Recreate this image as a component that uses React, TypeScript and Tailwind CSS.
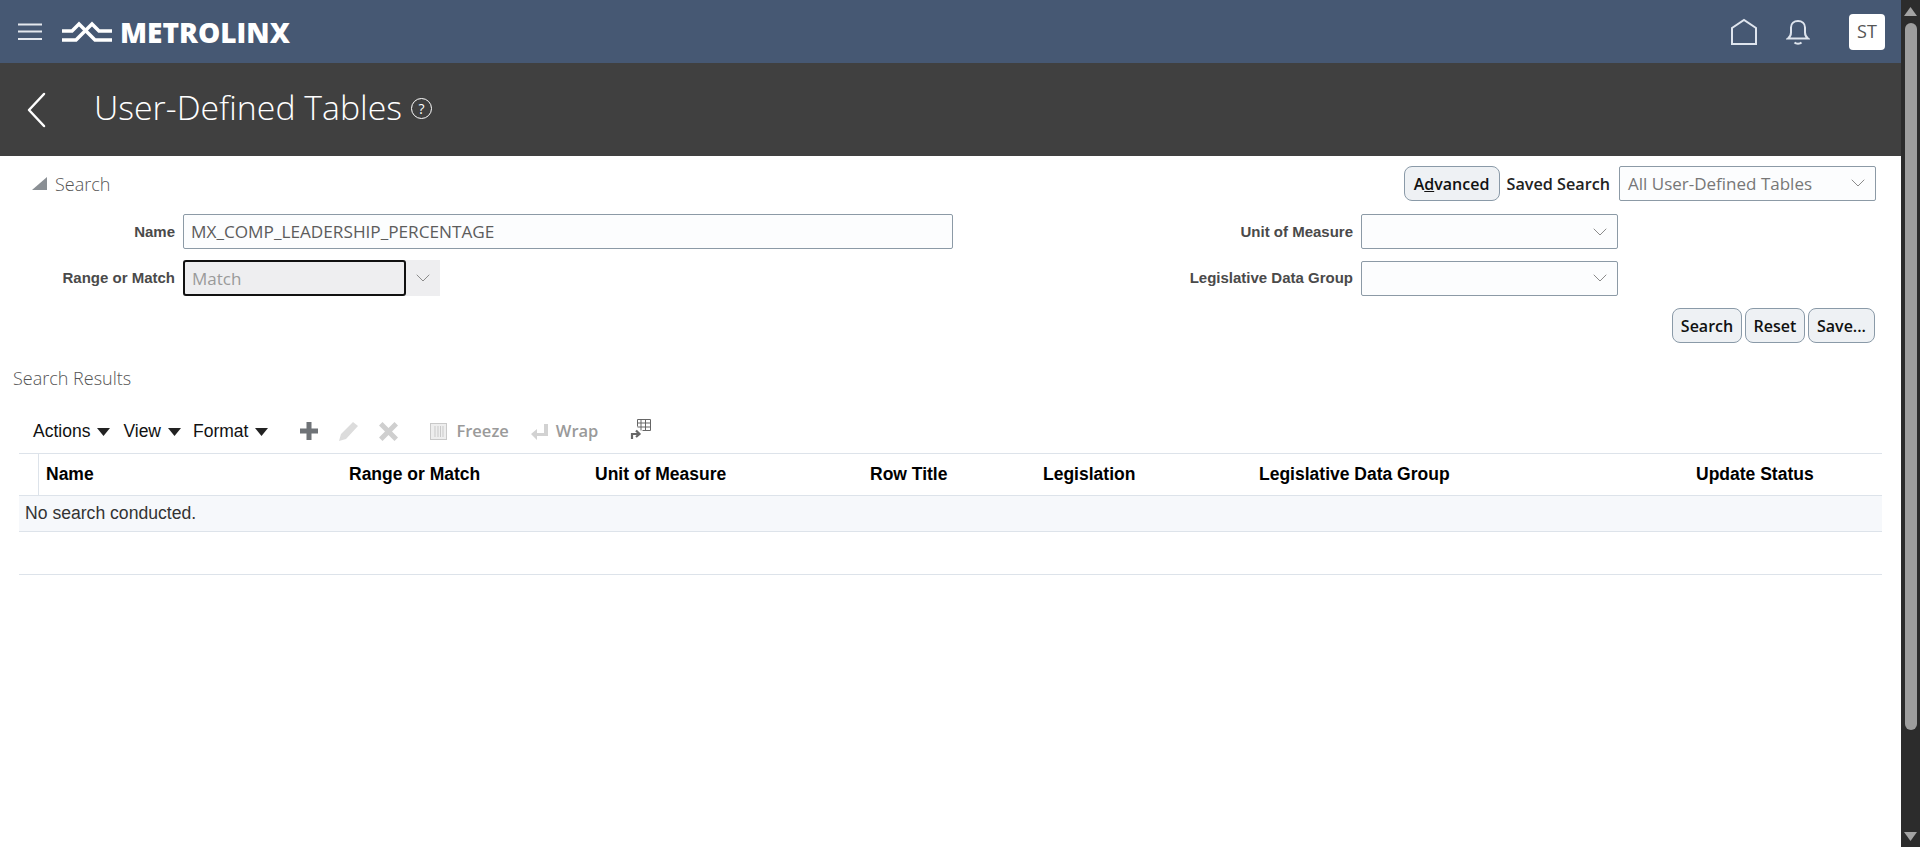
import { ChevronDown } from 'lucide-react'

const labelCls = "font-['Liberation_Sans',sans-serif] text-[15px] font-bold text-[#4a4a4a] text-right mt-[1px]"
const buttonCls =
  "h-[35px] pt-[1px] rounded-[8px] border border-[#8a9aa8] bg-[#eef1f4] font-['Open_Sans',sans-serif] text-[16px] font-semibold text-[#111] flex items-center justify-center"

function Logo() {
  return (
    <div className="flex items-center ml-[20px]">
      <svg width="50" height="22" viewBox="0 0 50 22" fill="none" stroke="#fff" strokeWidth="3.5">
        <path d="M0 10h10l7-7 16 16h17" />
        <path d="M0 19h14L30 3l7 7h13" />
      </svg>
      <span className="ml-[8px] font-['Open_Sans',sans-serif] text-[28px] leading-none font-extrabold text-white">
        METROLINX
      </span>
    </div>
  )
}

function SelectBox({ width, text }: { width: string; text?: string }) {
  return (
    <div className={`${width} h-[35px] rounded-[2px] border border-[#8c9aa6] bg-[#fcfdfe] flex items-center pl-[8px] pr-[5px]`}>
      <span className="mt-[2px] font-['Open_Sans',sans-serif] text-[17px] text-[#777]">{text}</span>
      <ChevronDown size={24} strokeWidth={1} className="ml-auto text-[#8b8b8b]" />
    </div>
  )
}

function ToolbarMenu({ label }: { label: string }) {
  return (
    <span className="flex items-center font-['Liberation_Sans',sans-serif] text-[17.500px] text-[#111]">
      {label}
      <svg width="13" height="8" viewBox="0 0 13 8" className="ml-[7px] mt-[2px]">
        <path d="M0 0h13L6.500 8z" fill="#222" />
      </svg>
    </span>
  )
}

const columns = [
  { name: 'Name', width: 'w-[303px]' },
  { name: 'Range or Match', width: 'w-[246px]' },
  { name: 'Unit of Measure', width: 'w-[275px]' },
  { name: 'Row Title', width: 'w-[173px]' },
  { name: 'Legislation', width: 'w-[216px]' },
  { name: 'Legislative Data Group', width: 'w-[437px]' },
  { name: 'Update Status', width: 'w-[170px]' },
]

export default function App() {
  return (
    <div className="flex h-screen overflow-hidden bg-white">
      <main className="flex-1 min-w-0">
        {/* Global header */}
        <header className="h-[63px] bg-[#465873] flex items-center pl-[18px] pr-[16px]">
          <svg width="24" height="18" viewBox="0 0 24 18" fill="none" stroke="#e4e8ee" strokeWidth="2">
            <path d="M0 1.500h24M0 8.500h24M0 16h24" />
          </svg>
          <Logo />
          <svg width="28" height="28" viewBox="0 0 28 28" fill="none" stroke="#dfe5ee" strokeWidth="2" className="ml-auto">
            <path d="M2 26V10L14 2l12 8v16z" />
          </svg>
          <svg width="24" height="28" viewBox="0 0 24 28" fill="none" stroke="#dfe5ee" strokeWidth="2" className="ml-[28px]">
            <path d="M2 20.500c2-1.500 3-3 3-6V9.500C5 5.500 8 3 12 3s7 2.500 7 6.500v5c0 3 1 4.500 3 6z" />
            <path d="M8.500 24.500c1.500 1.500 5.500 1.500 7 0" />
          </svg>
          <div className="ml-[39px] w-[36px] h-[36px] rounded-[4px] bg-white flex items-center justify-center font-['Open_Sans',sans-serif] text-[18px] text-[#555]">
            ST
          </div>
        </header>

        {/* Page title */}
        <div className="h-[93px] bg-[#404040] flex items-center pl-[27px]">
          <svg width="19" height="36" viewBox="0 0 19 36" fill="none" stroke="#fff" strokeWidth="2.500" strokeLinecap="round" strokeLinejoin="round" className="mt-[1px]">
            <path d="M17 2L2 18l15 16" />
          </svg>
          <h1 className="ml-[48px] -mt-[3px] font-['Open_Sans',sans-serif] text-[33.800px] font-light leading-none text-white">
            User-Defined Tables
          </h1>
          <div className="ml-[9px] -mt-[2px] w-[21px] h-[21px] rounded-full border-[1.500px] border-white flex items-center justify-center font-['Open_Sans',sans-serif] text-[14px] text-white">
            ?
          </div>
        </div>

        {/* Search panel */}
        <section className="pt-[10px] pr-[25px]">
          <div className="flex items-center h-[34px]">
            <svg width="15" height="13" viewBox="0 0 15 13" className="ml-[32px]">
              <path d="M0 13h15V0z" fill="#8a8f94" />
            </svg>
            <span className="ml-[8px] mt-[2px] font-['Open_Sans',sans-serif] text-[18px] font-light text-[#555]">Search</span>
            <button className={`${buttonCls} ml-auto w-[96px]`}>
              A<span className="underline">d</span>vanced
            </button>
            <span className="ml-[7px] mt-[2px] font-['Open_Sans',sans-serif] text-[16.200px] font-semibold text-[#222]">Saved Search</span>
            <div className="ml-[9px]">
              <SelectBox width="w-[257px]" text="All User-Defined Tables" />
            </div>
          </div>

          <div className="flex items-center mt-[14px]">
            <span className={`${labelCls} w-[175px]`}>Name</span>
            <div className="ml-[8px] w-[770px] h-[35px] rounded-[2px] border border-[#8c9aa6] bg-[#fcfdfe] flex items-center pl-[7px] pt-[1px] font-['Open_Sans',sans-serif] text-[17.200px] text-[#5c5c5c]">
              MX_COMP_LEADERSHIP_PERCENTAGE
            </div>
            <span className={`${labelCls} ml-auto`}>Unit of Measure</span>
            <div className="ml-[8px] mr-[258px]">
              <SelectBox width="w-[257px]" />
            </div>
          </div>

          <div className="flex items-center mt-[11px]">
            <span className={`${labelCls} w-[175px]`}>Range or Match</span>
            <div className="ml-[8px] flex items-center h-[36px] w-[257px] bg-[#eeeef0]">
              <div className="w-[223px] h-full rounded-[3px] border-2 border-[#111] flex items-center pl-[7px] pt-[2px] font-['Open_Sans',sans-serif] text-[17px] text-[#9a9a9a]">
                Match
              </div>
              <ChevronDown size={24} strokeWidth={1} className="ml-[5px] text-[#8b8b8b]" />
            </div>
            <span className={`${labelCls} ml-auto`}>Legislative Data Group</span>
            <div className="ml-[8px] mr-[258px]">
              <SelectBox width="w-[257px]" />
            </div>
          </div>

          <div className="flex justify-end gap-[3px] mt-[12px] pr-[1px]">
            <button className={`${buttonCls} w-[70px]`}>Search</button>
            <button className={`${buttonCls} w-[60px]`}>Reset</button>
            <button className={`${buttonCls} w-[67px]`}>Save...</button>
          </div>
        </section>

        {/* Results */}
        <section>
          <h2 className="mt-[22px] ml-[13px] h-[26px] font-['Open_Sans',sans-serif] text-[18px] leading-[26px] font-light text-[#555]">
            Search Results
          </h2>
          <div className="flex items-center mt-[25px] h-[30px] ml-[33px]">
            <ToolbarMenu label="Actions" />
            <div className="ml-[13px]"><ToolbarMenu label="View" /></div>
            <div className="ml-[12px]"><ToolbarMenu label="Format" /></div>
            <svg width="18" height="18" viewBox="0 0 18 18" className="ml-[32px]">
              <path d="M6.500 0h5v6.500H18v5h-6.500V18h-5v-6.500H0v-5h6.500z" fill="#6f7377" />
            </svg>
            <svg width="22" height="22" viewBox="0 0 22 22" className="ml-[20px]">
              <path d="M15 2l5 4L8 19l-7 2 2-7zM16 0l5 4" fill="#dcdcdc" />
            </svg>
            <svg width="19" height="19" viewBox="0 0 19 19" className="ml-[19px]">
              <path d="M3.500 0l6 6 6-6L19 3.500l-6 6 6 6-3.500 3.500-6-6-6 6L0 15.500l6-6-6-6z" fill="#cfcfcf" />
            </svg>
            <svg width="17" height="17" viewBox="0 0 17 17" fill="none" stroke="#c9c9c9" className="ml-[32px]">
              <rect x="0.500" y="0.500" width="16" height="16" fill="#eee" />
              <path d="M5 3v11M8 3v11M10.500 3v11M13 3v11" />
            </svg>
            <span className="ml-[9px] font-['Open_Sans',sans-serif] text-[16.500px] font-semibold text-[#9a9a9a]">Freeze</span>
            <svg width="17" height="17" viewBox="0 0 17 17" className="ml-[22px]">
              <path d="M13 1h4v12H6v4L0 11l6-5v4h7z" fill="#d2d2d2" />
            </svg>
            <span className="ml-[8px] font-['Open_Sans',sans-serif] text-[16.500px] font-semibold text-[#9a9a9a]">Wrap</span>
            <svg width="21" height="22" viewBox="0 0 21 22" fill="none" stroke="#666" className="ml-[32px] -mt-[4px]">
              <path d="M7.500 1.500h13v11h-8M7.500 1.500v7M7.500 5h13M11 1.500v11M15.500 1.500v11M7.500 9h13" />
              <path d="M2 21v-5h7M6 12.500l3.500 3.500L6 19" strokeWidth="2.200" />
            </svg>
          </div>

          <div className="ml-[19px] mr-[19px] mt-[7px] border-t border-[#dde3ea]">
            <div className="flex h-[41px] items-center">
              <div className="w-[20px] h-full border-r border-[#dde3ea]" />
              <div className="flex pl-[7px] font-['Liberation_Sans',sans-serif] text-[17.500px] font-bold text-black">
                {columns.map((col) => (
                  <span key={col.name} className={col.width}>{col.name}</span>
                ))}
              </div>
            </div>
            <div className="h-[37px] bg-[#f6f8fb] border-y border-[#dde3ea] flex items-center pl-[6px] font-['Liberation_Sans',sans-serif] text-[17.600px] text-[#333]">
              No search conducted.
            </div>
            <div className="h-[43px] border-b border-[#dde3ea]" />
          </div>
        </section>
      </main>

      {/* Browser scrollbar */}
      <aside className="w-[19px] shrink-0 bg-[#2c2c2c] flex flex-col items-center pt-[7px]">
        <svg width="13" height="9" viewBox="0 0 13 9">
          <path d="M6.500 0L13 9H0z" fill="#a3a3a3" />
        </svg>
        <div className="mt-[7px] w-[12px] h-[707px] rounded-full bg-[#9e9e9e]" />
        <svg width="13" height="9" viewBox="0 0 13 9" className="mt-auto mb-[6px]">
          <path d="M0 0h13L6.500 9z" fill="#a3a3a3" />
        </svg>
      </aside>
    </div>
  )
}
